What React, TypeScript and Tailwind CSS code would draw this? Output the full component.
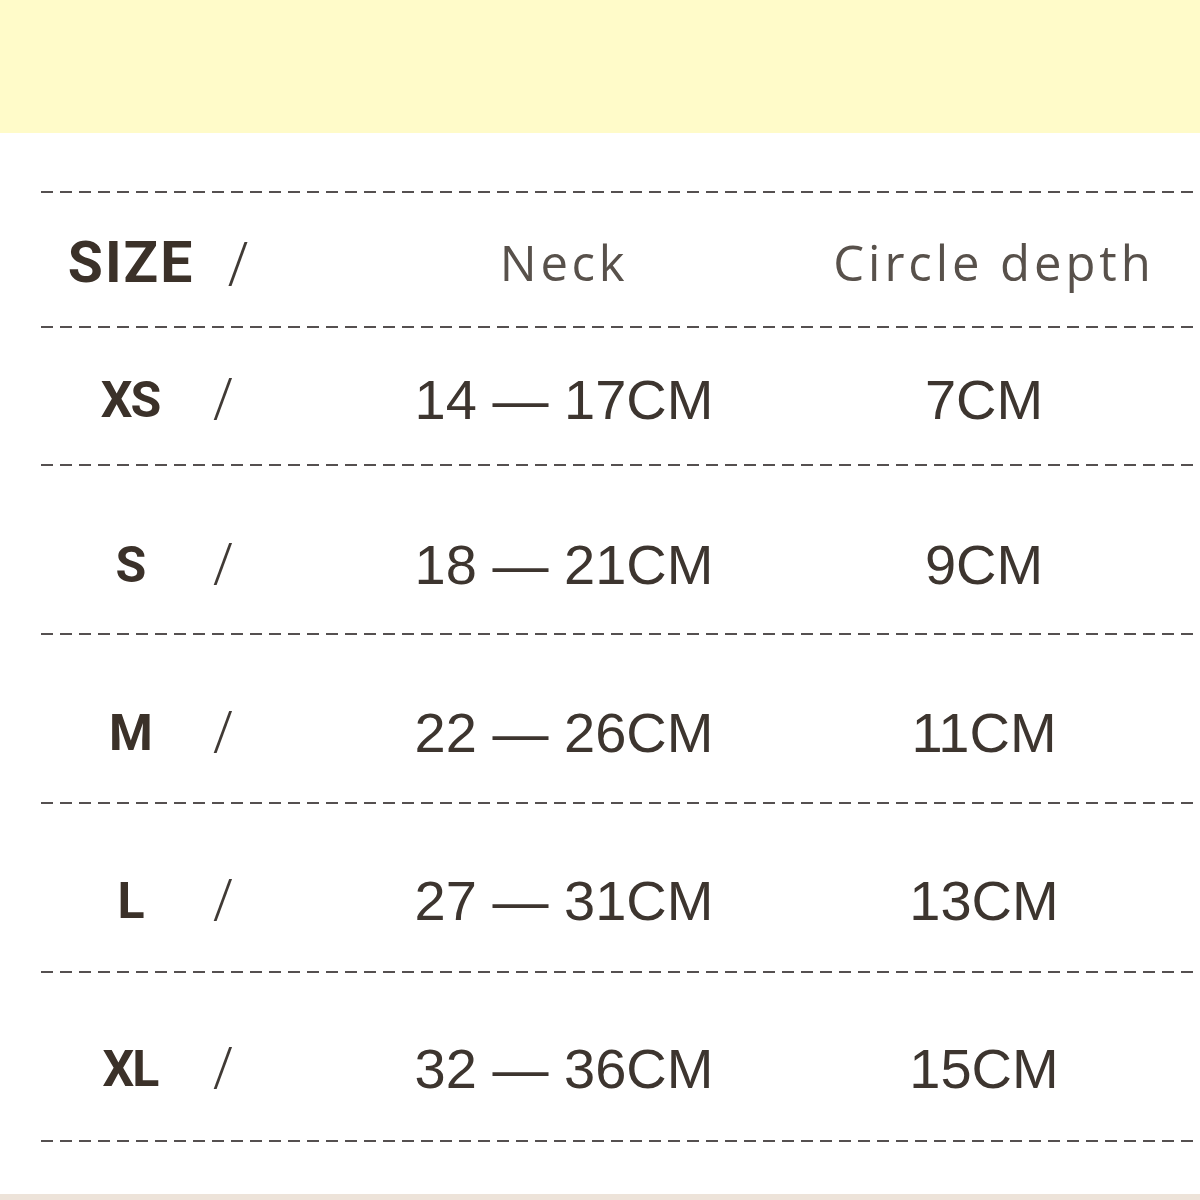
import React from "react";

const rows = [
  { size: "XS", neck: "14 — 17CM", depth: "7CM", h: "h-[136px]", pt: "pt-[8px]" },
  { size: "S", neck: "18 — 21CM", depth: "9CM", h: "h-[167px]", pt: "pt-[30px]" },
  { size: "M", neck: "22 — 26CM", depth: "11CM", h: "h-[167px]", pt: "pt-[28px]" },
  { size: "L", neck: "27 — 31CM", depth: "13CM", h: "h-[167px]", pt: "pt-[26px]" },
  { size: "XL", neck: "32 — 36CM", depth: "15CM", h: "h-[167px]", pt: "pt-[24px]" },
];

const Dash = () => (
  <div className="h-[2px] w-full bg-[repeating-linear-gradient(to_right,#555050_0_12px,transparent_12px_19px)]" />
);

const App: React.FC = () => {
  return (
    <div className="w-[1200px] h-[1200px] bg-white overflow-hidden flex flex-col">
      <div className="h-[133px] bg-[#fffbc9]" />
      <div className="flex-1 pt-[58px] pl-[41px]">
        <Dash />
        <div className="h-[133px] grid grid-cols-[174px_16px_666px_174px] items-center pt-[6px]">
          <div className="flex justify-center font-['Roboto',sans-serif] font-bold text-[57px] text-[#3b3129] tracking-[2px] translate-x-[3px]">
            SIZE
          </div>
          <div className="flex justify-center font-['Open_Sans',sans-serif] font-light text-[60px] leading-none text-[#403a35] translate-x-[15px]">
            /
          </div>
          <div className="flex justify-center font-['Open_Sans',sans-serif] text-[49px] text-[#58514b] tracking-[0.075em] whitespace-nowrap">
            Neck
          </div>
          <div className="flex justify-center font-['Open_Sans',sans-serif] text-[49px] text-[#58514b] tracking-[0.08em] whitespace-nowrap translate-x-[10px]">
            Circle depth
          </div>
        </div>
        {rows.map((r) => (
          <div key={r.size}>
            <Dash />
            <div
              className={`${r.h} ${r.pt} grid grid-cols-[174px_16px_666px_174px] items-center`}
            >
              <div className="flex justify-center font-['Roboto',sans-serif] font-bold text-[50px] text-[#3b3129] tracking-[-2px] leading-none translate-x-[2px]">
                {r.size}
              </div>
              <div className="flex justify-center font-['Open_Sans',sans-serif] font-light text-[58px] text-[#403a35] leading-none -translate-y-[2px]">
                /
              </div>
              <div className="flex justify-center font-['Liberation_Sans',sans-serif] text-[56px] text-[#3d352f] whitespace-nowrap leading-none">
                {r.neck}
              </div>
              <div className="flex justify-center font-['Liberation_Sans',sans-serif] text-[56px] text-[#3d352f] whitespace-nowrap leading-none">
                {r.depth}
              </div>
            </div>
          </div>
        ))}
        <Dash />
      </div>
      <div className="h-[6px] bg-[#ede3d9]" />
    </div>
  );
};

export default App;
